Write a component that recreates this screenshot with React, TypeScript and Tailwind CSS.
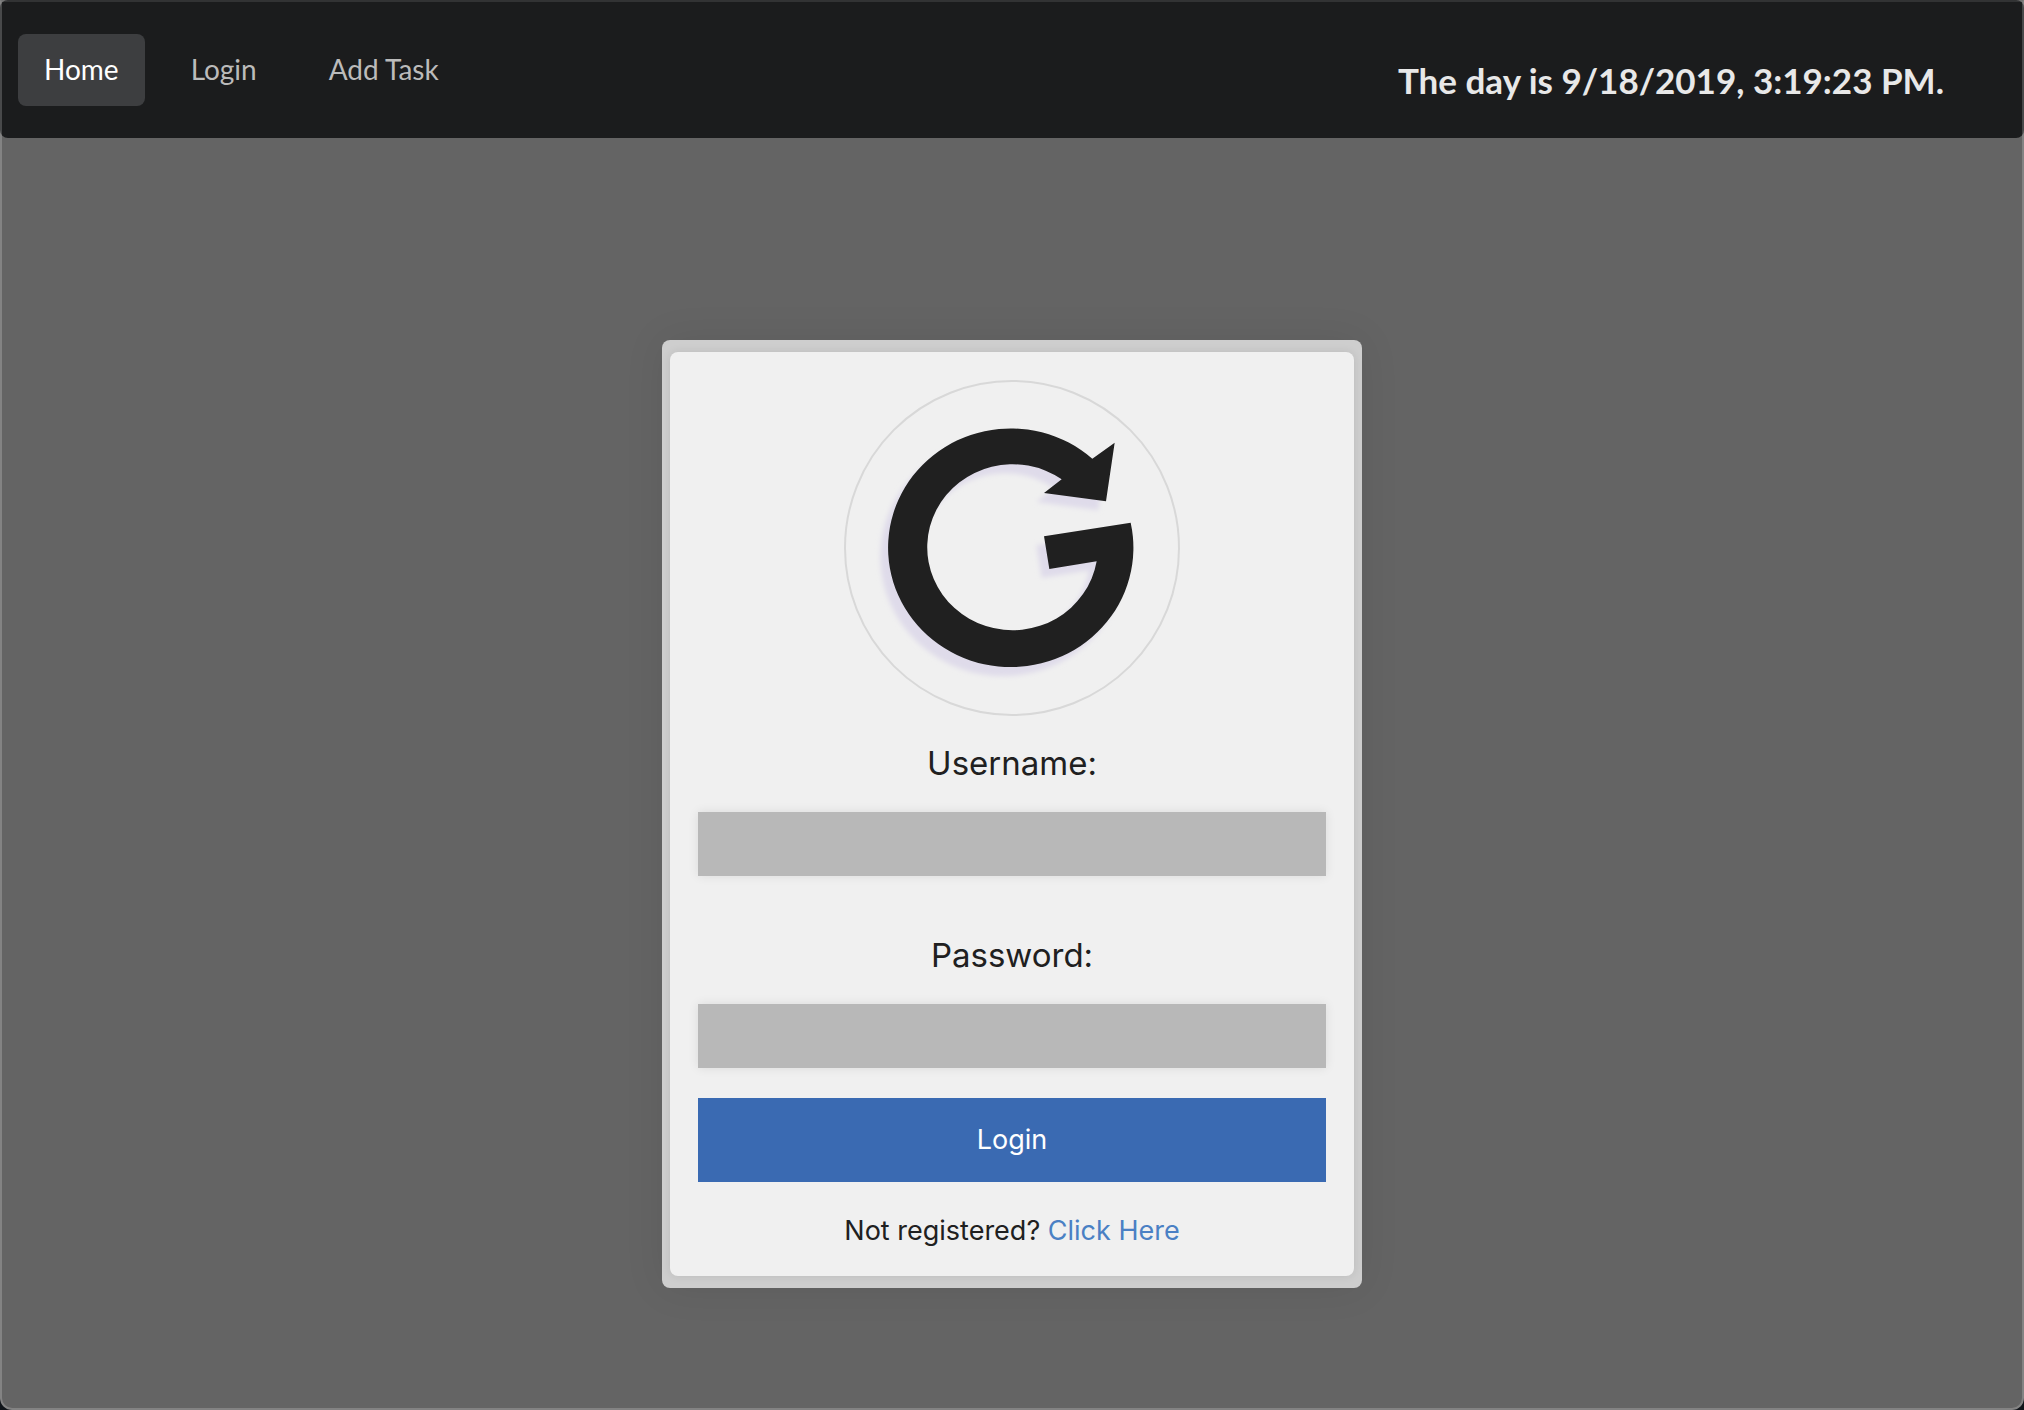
import React from "react";

const navItems = [
  { label: "Home", active: true },
  { label: "Login", active: false },
  { label: "Add Task", active: false },
];

const G_PATH =
  "M787 266A368 358 0 1 0 902 458L642 499L658 597L800 574A256 249 0 1 1 695 328L642 369L828 394L854 218Z";

function Logo() {
  return (
    <div className="size-[336px] overflow-hidden rounded-full border-2 border-[#d8d8d8]">
      <svg viewBox="48 36 996 996" className="size-full" role="img" aria-label="G logo">
        <defs>
          <filter id="soft" x="-10%" y="-10%" width="120%" height="120%">
            <feGaussianBlur stdDeviation="8" />
          </filter>
        </defs>
        <path d={G_PATH} fill="#dfdbea" transform="translate(-23 27)" filter="url(#soft)" />
        <path d={G_PATH} fill="#202020" />
      </svg>
    </div>
  );
}

function Field({ id, label, type }: { id: string; label: string; type: string }) {
  return (
    <div className="flex w-full flex-col items-center">
      <label htmlFor={id} className="text-[33px] leading-[38px]">
        {label}
      </label>
      <input
        id={id}
        type={type}
        className="mt-[30px] h-16 w-full bg-[#b8b8b8] px-5 text-[27px] shadow-[0_0_10px_rgba(0,0,0,0.09)] outline-none"
      />
    </div>
  );
}

export default function App() {
  return (
    <div className="min-h-screen bg-[#10151a]">
      <div className="relative flex min-h-screen flex-col overflow-hidden rounded-b-xl bg-[#646464] font-['Inter',sans-serif] text-[#202020]">
        <header className="flex h-[138px] items-center justify-between rounded-lg bg-[#1b1c1d] pr-20 pl-[18px] pt-0.5 font-['Lato',sans-serif]">
          <nav className="flex gap-5">
            {navItems.map((item) => (
              <a
                key={item.label}
                href="#"
                className={
                  item.active
                    ? "flex h-18 items-center rounded-lg bg-[#3d3e40] px-[26px] pb-0.5 text-[28px] text-white"
                    : "flex h-18 items-center rounded-lg px-[26px] pb-0.5 text-[28px] text-[#bbbbbb]"
                }
              >
                {item.label}
              </a>
            ))}
          </nav>
          <h2 className="pt-5 text-[35px] leading-[46px] font-bold text-[#e8e8e8]">
            The day is 9/18/2019, 3:19:23 PM.
          </h2>
        </header>

        <main className="mt-[202px] mb-[122px] flex justify-center">
          <div className="w-[700px] rounded-lg bg-[#cecece] px-2 py-3 shadow-[0_0_40px_rgba(0,0,0,0.08)]">
            <form
              className="flex flex-col items-center rounded-lg bg-[#f0f0f0] p-7 shadow-[0_0_10px_rgba(0,0,0,0.09)]"
              onSubmit={(e) => e.preventDefault()}
            >
              <Logo />
              <div className="mt-7 flex w-full flex-col gap-[60px]">
                <Field id="username" label="Username:" type="text" />
                <Field id="password" label="Password:" type="password" />
              </div>
              <button type="submit" className="mt-[30px] h-21 w-full bg-[#3a6ab2] text-[27px] text-white">
                Login
              </button>
              <p className="mt-8 text-[27px] leading-[34px]">
                Not registered?{" "}
                <a href="#" className="text-[#4a80c4]">
                  Click Here
                </a>
              </p>
            </form>
          </div>
        </main>
        <div className="pointer-events-none absolute inset-0 rounded-b-xl border-2 border-white/20 border-t-white/10" />
      </div>
    </div>
  );
}
